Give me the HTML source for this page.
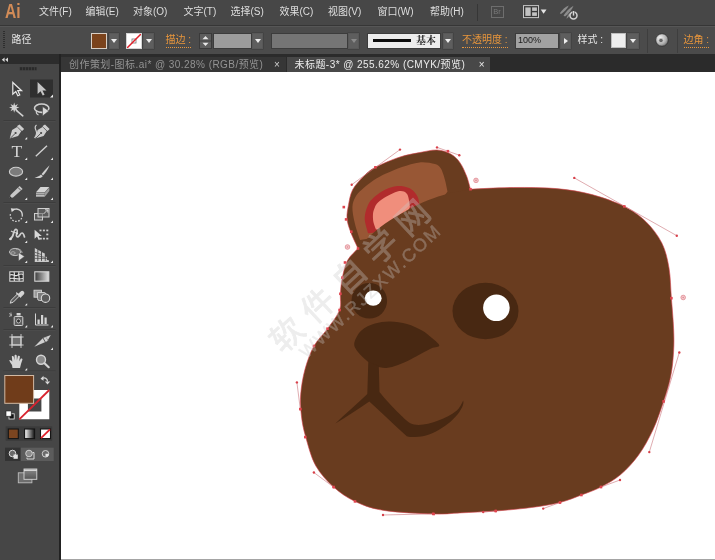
<!DOCTYPE html>
<html><head><meta charset="utf-8">
<style>
html,body{margin:0;padding:0;}
body{width:715px;height:560px;overflow:hidden;background:#fff;position:relative;font-family:"Liberation Sans","Noto Sans CJK SC",sans-serif;}
.abs{position:absolute;}
#menubar,#ctrlbar,#tabbar,#toolsvg{will-change:transform;}
#menubar{left:0;top:0;width:715px;height:25.500px;background:#474747;border-bottom:1px solid #363636;box-sizing:border-box;}
#ctrlbar{left:0;top:25.500px;width:715px;height:28px;background:#4b4b4b;box-shadow:inset 0 1px 0 #565656;}
#tabbar{left:60px;top:53.5px;width:655px;height:17.5px;background:#2b2b2b;}
#tools{left:0;top:53.5px;width:58.5px;height:507px;background:#464646;border-right:2.5px solid #222;}
#toolhead{left:0;top:53.5px;width:58.5px;height:10px;background:#2c2c2c;}
.menu{position:absolute;top:5px;font-size:10px;color:#dedede;white-space:nowrap;line-height:14px;}
.tab{position:absolute;top:2.5px;height:15px;font-size:10px;letter-spacing:0.45px;line-height:16px;white-space:nowrap;}
.tab .x{position:absolute;top:0;font-size:10px;}
.ctext{font-size:10px;line-height:14px;white-space:nowrap;}
.lnk{color:#e8963c;border-bottom:1px dotted #e8963c;line-height:14px;}
.sw{box-sizing:border-box;}
.dd{width:10.5px;height:16px;background:#5e5e5e;border:1px solid #585858;box-shadow:0 0 0 0.5px #3c3c3c;box-sizing:border-box;}
.dd i{position:absolute;left:1.5px;top:5px;width:0;height:0;border-style:solid;border-width:4px 3px 0 3px;border-color:#eee transparent transparent transparent;}
.dd.dis i{border-top-color:#8a8a8a;}
</style></head><body>
<div id="menubar" class="abs">
<div class="abs" style="left:5.200px;top:-1.200px;font-size:20px;font-weight:bold;color:#d18b57;line-height:25px;transform:scaleX(0.780);transform-origin:0 0;">Ai</div>
<div class="menu" style="left:39px;">文件(F)</div>
<div class="menu" style="left:85.5px;">编辑(E)</div>
<div class="menu" style="left:133px;">对象(O)</div>
<div class="menu" style="left:183.5px;">文字(T)</div>
<div class="menu" style="left:230.5px;">选择(S)</div>
<div class="menu" style="left:279.5px;">效果(C)</div>
<div class="menu" style="left:328px;">视图(V)</div>
<div class="menu" style="left:377.5px;">窗口(W)</div>
<div class="menu" style="left:430px;">帮助(H)</div>
<div class="abs" style="left:477px;top:4px;width:1px;height:17px;background:#363636;"></div>
<div class="abs" style="left:490.5px;top:6px;width:13px;height:11.5px;border:1px solid #6e6e6e;box-sizing:border-box;font-size:7.5px;line-height:10px;color:#7a7a7a;text-align:center;">Br</div>
<svg class="abs" style="left:520px;top:3px" width="62" height="20" viewBox="520 3 62 20">
<rect x="523.5" y="5.600" width="15" height="12" fill="#383838" stroke="#c6c6c6" stroke-width="1"/>
<rect x="525.300" y="7.400" width="5.400" height="8.500" fill="#c2c2c2"/>
<rect x="532.100" y="7.400" width="4.800" height="3.500" fill="#c2c2c2"/>
<rect x="532.100" y="12.300" width="4.800" height="3.600" fill="#c2c2c2"/>
<path d="M540.700,9.600h5.800l-2.900,4.200z" fill="#e4e4e4"/>
<g fill="#8c8c8c">
<path d="M559.800,13.200c2.500,-3.500 5.500,-6 9,-7.600c-1.500,3.500 -4.500,6.400 -7.800,8.400z"/>
<path d="M563.500,15.500c2.500,-4 5.800,-7.500 10,-9.800c-1.500,4 -4.800,8 -8.500,10.800z"/>
<path d="M566.500,18.800c0.300,-2 1.500,-4 3,-5.500l1.200,1.200c-1.500,1.800 -2.800,3.300 -4.200,4.300z"/>
</g>
<circle cx="573.500" cy="15.600" r="3.500" fill="#474747" stroke="#d2d2d2" stroke-width="1.500"/>
<rect x="572.400" y="10.500" width="2.200" height="5" fill="#474747"/>
<rect x="572.800" y="11" width="1.400" height="4.600" fill="#d8d8d8"/>
</svg>
</div>
<div id="ctrlbar" class="abs">
<div class="abs" style="left:2.5px;top:5px;width:2px;height:17px;background:repeating-linear-gradient(#2e2e2e 0 1px,transparent 1px 2px);"></div>
<div class="abs ctext" style="left:11.5px;top:6.500px;color:#e4e4e4;">路径</div>
<div class="abs sw" style="left:90.5px;top:6.500px;width:16px;height:16px;background:#7b431c;border:1px solid #d9cfc5;"></div>
<div class="abs dd" style="left:108.5px;top:6.500px;"><i></i></div>
<div class="abs sw" style="left:125.5px;top:6.500px;width:16px;height:16px;background:#fff;border:1px solid #d4d4d4;"><svg width="14" height="14" viewBox="0 0 14 14" style="position:absolute;left:0;top:0"><rect x="5" y="5" width="4" height="4" fill="none" stroke="#777" stroke-width="0.8"/><path d="M0,14L14,0" stroke="#e0202a" stroke-width="1.5"/></svg></div>
<div class="abs dd" style="left:143px;top:6.500px;"><i></i></div>
<div class="abs ctext lnk" style="left:165.5px;top:6.500px;">描边 :</div>
<div class="abs" style="left:199px;top:6.500px;width:12.5px;height:16px;background:#5e5e5e;border:1px solid #3a3a3a;box-sizing:border-box;"><svg width="11" height="14" viewBox="0 0 11 14" style="position:absolute;left:0;top:0"><path d="M2.5,5.2L5.5,2L8.5,5.2z M2.5,8.8L5.5,12L8.5,8.8z" fill="#e6e6e6"/><path d="M0,7h11" stroke="#3a3a3a" stroke-width="0.8"/></svg></div>
<div class="abs" style="left:213px;top:6.500px;width:38.5px;height:16px;background:#9c9c9c;border:1px solid #3c3c3c;box-sizing:border-box;"></div>
<div class="abs dd" style="left:252px;top:6.500px;"><i></i></div>
<div class="abs" style="left:271px;top:6.500px;width:76.5px;height:16px;background:#757575;border:1px solid #3c3c3c;box-sizing:border-box;"></div>
<div class="abs dd dis" style="left:348px;top:6.500px;"><i></i></div>
<div class="abs" style="left:367px;top:6.500px;width:74px;height:16px;background:#ececec;border:1px solid #3c3c3c;box-sizing:border-box;">
<div class="abs" style="left:5px;top:5.200px;width:38px;height:3.200px;background:#0c0c0c;"></div>
<div class="abs" style="left:48px;top:-1px;font-size:10px;line-height:16px;color:#222;font-weight:bold;font-family:'Liberation Serif','Noto Serif CJK SC',serif;">基本</div></div>
<div class="abs dd" style="left:442.500px;top:6.500px;"><i></i></div>
<div class="abs ctext lnk" style="left:462px;top:6.500px;">不透明度 :</div>
<div class="abs" style="left:515px;top:6.500px;width:44px;height:16px;background:#a2a2a2;border:1px solid #3c3c3c;box-sizing:border-box;"><span style="position:absolute;left:2px;top:0;font-size:9px;line-height:13px;color:#1c1c1c;">100%</span></div>
<div class="abs dd" style="left:560px;top:6.500px;"><i style="border-width:3px 0 3px 4.5px;border-color:transparent transparent transparent #eee;left:3px;top:4px;"></i></div>
<div class="abs ctext" style="left:577.5px;top:6.500px;color:#e4e4e4;">样式 :</div>
<div class="abs sw" style="left:611px;top:7px;width:15px;height:15px;background:#eeeeee;border:1px solid #bdbdbd;"></div>
<div class="abs dd" style="left:627px;top:6.500px;width:11.5px;"><i></i></div>
<div class="abs" style="left:646.5px;top:3px;width:1px;height:24px;background:#3e3e3e;"></div>
<svg class="abs" style="left:654px;top:6px" width="16" height="16" viewBox="0 0 16 16"><defs><radialGradient id="rg" cx="0.35" cy="0.35" r="0.8"><stop offset="0" stop-color="#f4f4f4"/><stop offset="0.6" stop-color="#b0b0b0"/><stop offset="1" stop-color="#555"/></radialGradient></defs><circle cx="8" cy="8" r="6.3" fill="url(#rg)" stroke="#2e2e2e" stroke-width="0.8"/><circle cx="7" cy="8.5" r="2.2" fill="#666" stroke="#ddd" stroke-width="0.6"/></svg>
<div class="abs" style="left:677px;top:3px;width:1px;height:24px;background:#3e3e3e;"></div>
<div class="abs ctext lnk" style="left:683.5px;top:6.500px;">边角 :</div>
</div>
<div id="tabbar" class="abs">
<div class="tab" style="left:1px;width:225px;background:#363636;color:#939393;"><span style="position:absolute;left:8px;top:0;">创作策划-图标.ai* @ 30.28% (RGB/预览)</span><span class="x" style="left:213px;color:#d0d0d0;">×</span></div>
<div class="tab" style="left:227px;width:203px;background:#484848;color:#ececec;"><span style="position:absolute;left:7.5px;top:0;">未标题-3* @ 255.62% (CMYK/预览)</span><span class="x" style="left:191.7px;">×</span></div>
</div>
<div id="botline" class="abs" style="left:61px;top:558.8px;width:654px;height:1.2px;background:#a4a4a4;"></div>
<div id="tools" class="abs"></div>
<div id="toolhead" class="abs"></div>
<svg id="toolsvg" class="abs" style="left:0;top:54px" width="61" height="506" viewBox="0 54 61 506">
<defs>
<linearGradient id="gh" x1="0" x2="1" y1="0" y2="0"><stop offset="0" stop-color="#3a3a3a"/><stop offset="1" stop-color="#e0e0e0"/></linearGradient>
<linearGradient id="gw" x1="0" x2="1" y1="0" y2="0"><stop offset="0" stop-color="#ffffff"/><stop offset="1" stop-color="#111"/></linearGradient>
<linearGradient id="gv" x1="0" x2="0" y1="0" y2="1"><stop offset="0" stop-color="#8a8a8a"/><stop offset="1" stop-color="#555"/></linearGradient>
</defs>
<!-- header arrows -->
<path d="M4.6,57.6v4.4l-2.8,-2.2z M8,57.6v4.4l-2.8,-2.2z" fill="#d8d8d8"/>
<!-- grip -->
<g fill="#2a2a2a"><rect x="19.5" y="67" width="17" height="3.4" fill="#3a3a3a"/><rect x="20" y="67.3" width="2" height="2.8"/><rect x="23" y="67.3" width="2" height="2.8"/><rect x="26" y="67.3" width="2" height="2.8"/><rect x="29" y="67.3" width="2" height="2.8"/><rect x="32" y="67.3" width="2" height="2.8"/><rect x="35" y="67.3" width="1.4" height="2.8"/></g>
<!-- selected tool bg -->
<rect x="30" y="79.5" width="23" height="18" fill="#2f2f2f"/>
<!-- selection arrow (outline) -->
<path d="M12.8,82.5v11.6l3,-2.6l2,4.3l2,-0.9l-2,-4.2h3.8z" fill="#3a3a3a" stroke="#e6e6e6" stroke-width="1.2" stroke-linejoin="miter"/>
<!-- direct selection (filled) -->
<path d="M37.6,82v12l3,-2.8l2.1,4.4l1.9,-0.9l-2.1,-4.3h4z" fill="#c4c4c4"/>
<path d="M53,94.6v3h-3z" fill="#f0f0f0"/>
<!-- magic wand -->
<path d="M16.300,110.300l6.500,5.500" stroke="#d0d0d0" stroke-width="1.600" stroke-linecap="round"/>
<path d="M14.2,102.4L15.1,105.4L17.9,103.9L16.4,106.7L19.4,107.6L16.4,108.5L17.9,111.3L15.1,109.8L14.2,112.8L13.3,109.8L10.5,111.3L12.0,108.5L9.0,107.6L12.0,106.7L10.5,103.9L13.3,105.4z" fill="#d2d2d2"/>
<!-- lasso -->
<ellipse cx="41.700" cy="108.200" rx="7.200" ry="4.200" fill="none" stroke="#cfcfcf" stroke-width="1.600"/>
<path d="M37,110.5c-1.5,1.5 -0.5,3.5 1.5,4.5" fill="none" stroke="#cfcfcf" stroke-width="1.2"/>
<path d="M42.5,106.5v9.5l6.5,-5z" fill="#d8d8d8" stroke="#464646" stroke-width="0.6"/>
<!-- separators -->
<g stroke="#3a3a3a" stroke-width="1"><path d="M3.500,120.500h52 M3.500,202.500h52 M3.500,265.500h52 M3.500,307.500h52 M3.500,329.500h52 M3.500,371h52"/></g>
<g stroke="#525252" stroke-width="0.6"><path d="M3.500,121.300h52 M3.500,203.300h52 M3.500,266.300h52 M3.500,308.300h52 M3.500,330.300h52 M3.500,371.800h52"/></g>
<!-- pen -->
<g id="pen"><path d="M19.5,124.5l4.6,4.6l-2,2l-0.6,-0.4l-3.4,5.4l-8.4,2.4l2.4,-8.4l5.4,-3.4l-0.4,-0.6z" fill="#cdcdcd"/><path d="M10.3,138.3l4.7,-4.7" stroke="#464646" stroke-width="0.9"/><circle cx="15.6" cy="133" r="1.1" fill="#464646"/><path d="M17.6,127.2l4,4" stroke="#464646" stroke-width="0.8"/></g>
<path d="M27.2,137v2.4h-2.4z" fill="#e8e8e8"/>
<!-- curvature pen -->
<g transform="translate(25.5,0)"><path d="M19.5,124.5l4.6,4.6l-2,2l-0.6,-0.4l-3.4,5.4l-8.4,2.4l2.4,-8.4l5.4,-3.4l-0.4,-0.6z" fill="#cdcdcd"/><path d="M10.3,138.3l4.7,-4.7" stroke="#464646" stroke-width="0.9"/><circle cx="15.6" cy="133" r="1.1" fill="#464646"/><path d="M17.6,127.2l4,4" stroke="#464646" stroke-width="0.8"/></g>
<path d="M36.5,125c-2,1.5 -1.5,3.5 -0.5,5.5s0.5,5 -1.5,7.5" fill="none" stroke="#cdcdcd" stroke-width="1.2"/>
<!-- T -->
<text x="16.8" y="157.3" font-family="Liberation Serif, serif" font-size="17.5" fill="#d4d4d4" text-anchor="middle">T</text>
<path d="M27.2,157.6v2.4h-2.4z" fill="#e8e8e8"/>
<!-- line -->
<path d="M35.8,156.3L47,145.8" stroke="#d0d0d0" stroke-width="1.4"/>
<path d="M53,157.6v2.4h-2.4z" fill="#e8e8e8"/>
<!-- ellipse -->
<ellipse cx="16" cy="171.7" rx="6.6" ry="4.4" fill="#7c7c7c" stroke="#cfcfcf" stroke-width="1.1"/>
<path d="M27.2,177.6v2.4h-2.4z" fill="#e8e8e8"/>
<!-- brush -->
<path d="M49.6,165.2c-3,3 -6,6.4 -8,8.8l1.4,1.4c2.4,-2.4 5,-6 6.600,-10.200z" fill="#d0d0d0"/>
<path d="M41,174.400l1.800,1.800c-1.500,2 -5,2.200 -8.300,1.300c2.600,-0.300 4.500,-1.300 6.500,-3.100z" fill="#d0d0d0"/>
<path d="M53,177.600v2.400h-2.400z" fill="#e8e8e8"/>
<!-- pencil -->
<g><path d="M19.600,186l3,3l-9.600,8.400l-3.400,0.900l0.900,-3.400z" fill="#c8c8c8"/><path d="M18,187.500l3,3" stroke="#464646" stroke-width="0.9"/><path d="M10.200,196.300l1.700,1.700l-2.400,0.700z" fill="#333"/></g>
<path d="M27.200,197.600v2.400h-2.400z" fill="#e8e8e8"/>
<!-- eraser -->
<g><path d="M40.500,187h8.800l-4.500,5.200h-8.800z" fill="#d4d4d4"/><path d="M36,192.700h8.800v4h-8.800z" fill="#bdbdbd"/><path d="M44.800,192.700l4.500,-5.200v3.600l-4.500,5.600z" fill="#9a9a9a"/><path d="M36,194.300h8.800" stroke="#464646" stroke-width="0.6"/></g>
<path d="M53,197.600v2.400h-2.400z" fill="#e8e8e8"/>
<!-- rotate -->
<path d="M12.500,210.500a6,6 0 0 1 9.800,4.500" fill="none" stroke="#cfcfcf" stroke-width="1.4"/>
<path d="M22.300,215a6,6 0 1 1 -11.500,-2" fill="none" stroke="#cfcfcf" stroke-width="1.300" stroke-dasharray="1.600 1.500"/>
<path d="M10.800,208.200l4.200,0.600l-3.200,3.400z" fill="#dcdcdc"/>
<path d="M27.200,220.500v2.400h-2.400z" fill="#e8e8e8"/>
<!-- scale -->
<rect x="34.500" y="213.500" width="8" height="6.500" fill="#5a5a5a" stroke="#cfcfcf" stroke-width="1"/>
<rect x="38" y="208.500" width="11" height="8.500" fill="#6a6a6a" fill-opacity="0.6" stroke="#cfcfcf" stroke-width="1"/>
<path d="M43.500,214l4,-4 M45,209.800h2.800v2.800" fill="none" stroke="#e0e0e0" stroke-width="0.9"/>
<path d="M53,220.500v2.400h-2.400z" fill="#e8e8e8"/>
<!-- width/warp -->
<path d="M10,239c2,-1 3,-3 3.500,-5.500s1.500,-4.500 3,-4s0.500,3.500 0,5s0.500,3 2,2s2,-3.500 3.500,-3.500s2,2 2.500,4" fill="none" stroke="#cfcfcf" stroke-width="1.700" stroke-linecap="round"/>
<path d="M11,231c2,1.500 4,2 6.500,2" fill="none" stroke="#cfcfcf" stroke-width="1.200"/>
<circle cx="10.600" cy="239" r="1.200" fill="#e0e0e0"/><circle cx="17" cy="233.500" r="1.100" fill="#e0e0e0"/>
<path d="M27.200,240.500v2.400h-2.400z" fill="#e8e8e8"/>
<!-- free transform -->
<path d="M34.600,229.700v9l2.400,-2.100l1.700,3.400l1.600,-0.800l-1.700,-3.300h3.200z" fill="#d8d8d8"/>
<g fill="#cfcfcf"><rect x="39.500" y="229.600" width="2" height="1.700"/><rect x="42.900" y="229.600" width="2" height="1.700"/><rect x="46.300" y="229.600" width="2" height="1.700"/><rect x="46.300" y="233.600" width="2" height="1.700"/><rect x="46.300" y="237.800" width="2" height="1.700"/><rect x="42.900" y="237.800" width="2" height="1.700"/><rect x="39.800" y="237.800" width="2" height="1.700"/></g>
<!-- shape builder -->
<ellipse cx="15" cy="252" rx="5.500" ry="3.600" fill="#6a6a6a" stroke="#bdbdbd" stroke-width="1"/>
<ellipse cx="13" cy="253" rx="2.200" ry="1.300" fill="none" stroke="#bdbdbd" stroke-width="0.700"/>
<path d="M16,249c3.500,-0.500 6,1.500 6,4" fill="none" stroke="#bdbdbd" stroke-width="0.900"/>
<path d="M18.500,252.500v8.500l6,-4.600z" fill="#dadada" stroke="#464646" stroke-width="0.500"/>
<path d="M27.200,260.500v2.400h-2.400z" fill="#e8e8e8"/>
<!-- perspective grid -->
<g fill="#cdcdcd"><path d="M34.800,248v13.400h2.600v-12z"/><path d="M38.300,250v11.400h2.800v-10z"/><path d="M42,252.300v9.100h2.800v-7.800z"/><path d="M45.600,256.500v4.900h3.200v-1.500h-1.800v-3z" fill="#bdbdbd"/></g>
<path d="M34.800,252.200l6.500,2.300 M34.800,255.300l10,2 M34.800,258.400h12" stroke="#464646" stroke-width="0.700" fill="none"/>
<path d="M34.800,261.400h14" stroke="#d4d4d4" stroke-width="1"/>
<path d="M53,260.500v2.400h-2.400z" fill="#e8e8e8"/>
<!-- mesh -->
<rect x="9.800" y="271.800" width="13.400" height="9.400" fill="#2e2e2e" stroke="#d6d6d6" stroke-width="1.100"/>
<path d="M10,275c3,-1.500 5,1.500 7,0.500s4,-2.500 6,-1 M14,272c1.500,3 -1,5.500 0.500,9 M19,272c-1.500,3 1.500,6 0,9 M10,278.500c4,-1 8,1.500 13,0" fill="none" stroke="#e4e4e4" stroke-width="1.100"/>
<!-- gradient -->
<rect x="34.800" y="271.800" width="14" height="9.400" fill="url(#gh)" stroke="#d6d6d6" stroke-width="1.100"/>
<!-- eyedropper -->
<path d="M10.200,303.200l1,-3l6.500,-6.500l2,2l-6.500,6.500z" fill="#5a5a5a" stroke="#d4d4d4" stroke-width="1"/>
<path d="M16.600,293l4,4 M18.500,294.500l2.600,-2.600a1.500,1.500 0 0 1 2.200,2.200l-2.600,2.600z" fill="#d4d4d4" stroke="#d4d4d4" stroke-width="1.200" stroke-linecap="round"/>
<path d="M27.200,303.200v2.400h-2.400z" fill="#e8e8e8"/>
<!-- blend -->
<rect x="34" y="290.200" width="7.500" height="7" fill="#9a9a9a" stroke="#d4d4d4" stroke-width="0.900"/>
<path d="M37.500,292.500h6.500a2,2 0 0 1 2,2v6h-6.500a2,2 0 0 1 -2,-2z" fill="#7a7a7a" stroke="#d4d4d4" stroke-width="0.900"/>
<circle cx="45.500" cy="298.200" r="4.200" fill="#5a5a5a" stroke="#d8d8d8" stroke-width="1.100"/>
<!-- symbol sprayer -->
<rect x="14.200" y="316.500" width="8.600" height="9" rx="1" fill="#5c5c5c" stroke="#d4d4d4" stroke-width="1"/>
<rect x="16.600" y="313" width="4" height="2.500" fill="#d4d4d4"/>
<circle cx="18.500" cy="321" r="2" fill="#2e2e2e" stroke="#d4d4d4" stroke-width="0.800"/>
<path d="M9,313.500l3,1.500 M9,316.500l3,-1.500 M11,312.500v4" stroke="#bdbdbd" stroke-width="0.800"/>
<path d="M27.200,325v2.400h-2.400z" fill="#e8e8e8"/>
<!-- graph -->
<path d="M35.500,313.500v11.500h13" fill="none" stroke="#d4d4d4" stroke-width="1"/>
<rect x="37.500" y="319.500" width="2.200" height="4.500" fill="#d4d4d4"/><rect x="41" y="315" width="2.200" height="9" fill="#d4d4d4"/><rect x="44.500" y="317.500" width="2.200" height="6.500" fill="#d4d4d4"/>
<path d="M53,325v2.400h-2.400z" fill="#e8e8e8"/>
<!-- artboard -->
<rect x="12" y="337" width="9" height="8" fill="#6e6e6e" stroke="#d4d4d4" stroke-width="1"/>
<path d="M9.300,337h14.300 M9.300,345h14.300 M12,334v14 M21,334v14" stroke="#d4d4d4" stroke-width="0.900"/>
<!-- slice -->
<path d="M34.300,346.800l8.700,-8.800l7.800,-3l-3.600,6.300z" fill="#d0d0d0"/><path d="M43,338l2.300,4" stroke="#464646" stroke-width="0.900"/><path d="M45.500,336.800l2.600,3.500" stroke="#8a8a8a" stroke-width="0.700"/>
<path d="M53,347.500v2.400h-2.400z" fill="#e8e8e8"/>
<!-- hand -->
<path d="M12.500,368l-0.500,-3c-1,-1.500 -2.500,-3.500 -2.700,-4.800c0.800,-0.700 2,0 3,1.600l-0.500,-5.500c0.900,-0.700 1.700,-0.300 2,0.500l0.600,3.500l0.200,-5c0.800,-0.700 1.800,-0.500 2.100,0.200l0.200,4.800l1,-4.300c0.900,-0.500 1.800,-0.200 2,0.600l-0.700,4.700l1.700,-2.800c0.900,-0.300 1.600,0.200 1.600,1c-1,2.500 -1.800,5.500 -2.500,8.500z" fill="#d6d6d6"/>
<path d="M27.200,368v2.400h-2.400z" fill="#e8e8e8"/>
<!-- zoom -->
<circle cx="41" cy="359.700" r="4.500" fill="#8a8a8a" stroke="#d4d4d4" stroke-width="1.400"/>
<path d="M44.500,363.200l4.200,4" stroke="#d4d4d4" stroke-width="2.200" stroke-linecap="round"/>
<!-- stroke swatch -->
<path d="M19.300,390h30v29.300h-30z M27.900,398.600v12.800h13.500v-12.800z" fill="#fff" fill-rule="evenodd"/>
<path d="M19.300,419.300L49.300,390" stroke="#d8232e" stroke-width="1.800"/>
<!-- fill swatch -->
<rect x="4.800" y="375.500" width="28.800" height="27.800" fill="#703c1a" stroke="#d2b9a3" stroke-width="1"/>
<!-- swap arrows -->
<path d="M42,378.500c3,-1.500 5.500,0 5.500,3" fill="none" stroke="#d0d0d0" stroke-width="1.300"/>
<path d="M40.500,378.800l3,-3v5z M47.500,384.500l-2.600,-3h5.200z" fill="#d8d8d8"/>
<!-- default colors -->
<rect x="9" y="413.800" width="5.200" height="5.200" fill="#111" stroke="#e8e8e8" stroke-width="0.800"/>
<rect x="6" y="411" width="5.200" height="5.200" fill="#fff" stroke="#222" stroke-width="0.600"/>
<!-- color mode buttons -->
<rect x="5.700" y="426.400" width="46.500" height="14.400" fill="#3b3b3b"/>
<rect x="8.300" y="429" width="10" height="9.600" fill="#7b4520" stroke="#151515" stroke-width="1.100"/>
<rect x="24.600" y="429" width="10" height="9.600" fill="url(#gw)" stroke="#151515" stroke-width="1.100"/>
<rect x="40.500" y="429" width="10" height="9.600" fill="#fff" stroke="#151515" stroke-width="1.100"/>
<path d="M41,438.200L50,429.400" stroke="#e0202a" stroke-width="1.800"/>
<!-- drawing modes -->
<rect x="5" y="447.700" width="15.700" height="13.300" fill="#333"/>
<rect x="20.700" y="447.700" width="33" height="13.300" fill="#5c5c5c"/>
<circle cx="12.500" cy="453.500" r="3.300" fill="#6a6a6a" stroke="#d8d8d8" stroke-width="1"/><rect x="13.500" y="454.500" width="4.300" height="4.300" fill="#e4e4e4"/>
<circle cx="29" cy="453.500" r="3.300" fill="#8a8a8a" stroke="#cfcfcf" stroke-width="1"/><path d="M27,457.500v1.500h7v-6.500h-1.500" fill="none" stroke="#d8d8d8" stroke-width="1"/>
<circle cx="45.500" cy="453.800" r="3.300" fill="#6a6a6a" stroke="#cfcfcf" stroke-width="1"/><path d="M45.500,453.800h3.300a3.300,3.300 0 0 1 -3.300,3.300z" fill="#e4e4e4"/>
<!-- screen mode -->
<rect x="18.300" y="472.800" width="13.600" height="10" fill="#6e6e6e" stroke="#bdbdbd" stroke-width="0.900"/>
<rect x="24" y="469" width="12.800" height="10.300" fill="url(#gv)" stroke="#d8d8d8" stroke-width="0.900"/>
<path d="M24,470.300h12.800" stroke="#e0e0e0" stroke-width="1.200"/>
</svg>
<svg class="abs" style="left:0;top:0" width="715" height="560" viewBox="0 0 715 560">
<!--BEAR--><g id="bear">
<path d="M358.0,248.5C356.8,245.7 352.3,236.7 350.5,231.7C348.7,226.7 347.3,222.8 347.0,218.3C346.7,213.8 347.6,209.6 348.5,204.9C349.4,200.2 350.1,194.7 352.5,190.0C354.9,185.3 359.2,180.8 363.0,177.0C366.8,173.2 369.2,170.6 375.4,167.3C381.6,164.0 392.6,159.4 400.0,157.0C407.4,154.6 413.3,153.8 419.5,152.6C425.7,151.4 431.8,149.8 437.0,150.0C442.2,150.2 447.0,151.9 450.8,154.0C454.6,156.1 457.2,158.8 459.8,162.4C462.4,166.0 464.7,171.3 466.5,175.8C468.3,180.3 469.8,187.0 470.5,189.2L420,230Z" fill="#693c1f"/>
<path d="M360.0,240.0C359.2,237.3 356.3,229.5 355.0,224.0C353.7,218.5 352.2,211.7 352.4,207.0C352.6,202.3 354.1,199.2 356.0,196.0C357.9,192.8 360.6,190.7 363.6,188.0C366.6,185.3 370.3,182.4 374.0,180.0C377.7,177.6 381.3,175.8 386.0,173.6C390.7,171.4 396.4,168.9 402.0,167.0C407.6,165.1 414.0,162.9 419.5,162.4C425.0,161.9 431.5,163.1 435.0,164.0C438.5,164.9 439.2,166.4 440.5,168.0C441.8,169.6 442.2,171.3 443.0,173.6C443.8,175.9 444.8,179.0 445.5,182.0C446.2,185.0 447.2,189.9 447.5,191.5L420,230Z" fill="#985735"/>
<path d="M368.0,233.2C367.4,230.7 364.7,223.0 364.7,218.3C364.7,213.6 366.4,208.4 368.0,204.9C369.6,201.4 371.7,199.5 374.0,197.3C376.3,195.1 379.3,193.1 381.8,191.5C384.3,189.9 386.6,188.9 389.0,188.0C391.4,187.1 393.5,186.4 396.0,186.2C398.5,185.9 401.6,186.1 404.0,186.5C406.4,186.9 408.7,187.8 410.5,188.8C412.3,189.9 413.7,191.2 415.0,192.8C416.3,194.4 417.5,196.2 418.2,198.2C418.9,200.2 419.1,203.9 419.3,205.0L400,230Z" fill="#b12b2c"/>
<path d="M376.0,229.5C375.6,228.2 373.9,224.6 373.4,222.0C372.9,219.4 372.8,216.2 373.0,213.8C373.2,211.4 374.0,209.4 374.8,207.5C375.6,205.6 376.1,204.4 378.0,202.6C379.9,200.8 383.4,198.4 386.0,196.8C388.6,195.2 391.2,194.0 393.5,193.0C395.8,192.0 397.8,191.2 399.5,191.0C401.2,190.8 402.8,191.0 404.0,191.5C405.2,192.0 406.2,192.9 407.0,194.0C407.8,195.1 408.1,196.0 408.6,198.2C409.1,200.4 409.8,205.6 410.0,207.1L400,225Z" fill="#f08e7c"/>
<path d="M358.0,248.5C359.3,247.1 363.2,242.8 366.0,240.0C368.8,237.2 371.6,234.4 374.7,231.7C377.8,229.0 381.1,226.4 384.5,224.0C387.9,221.6 391.6,219.2 394.9,217.2C398.1,215.2 401.0,213.7 404.0,212.0C407.0,210.3 409.9,208.6 412.8,207.1C415.7,205.6 418.5,204.3 421.5,203.0C424.5,201.7 426.4,200.9 430.7,199.3C435.0,197.8 440.9,195.4 447.5,193.7C454.1,192.0 466.7,189.9 470.5,189.2C477.7,188.9 499.3,187.6 513.6,187.5C527.9,187.4 543.3,187.4 556.4,188.6C569.5,189.8 580.7,191.6 592.0,194.6C603.3,197.6 615.3,201.9 624.3,206.4C633.2,210.9 639.5,215.3 645.7,221.4C652.0,227.5 657.9,235.2 661.8,242.9C665.7,250.7 667.4,258.7 669.0,267.9C670.6,277.1 670.6,288.1 671.4,298.2C672.2,308.3 673.2,319.7 673.6,328.6C674.0,337.5 674.1,343.4 673.6,351.4C673.1,359.4 672.4,368.1 670.7,376.4C669.0,384.7 666.6,392.5 663.6,401.4C660.6,410.3 657.1,421.1 652.9,430.0C648.7,438.9 644.0,447.6 638.6,455.0C633.2,462.4 627.0,469.3 620.7,474.6C614.4,479.9 607.5,483.6 601.0,487.0C594.5,490.4 588.2,492.4 581.4,495.0C574.6,497.6 568.3,500.4 560.0,502.5C551.7,504.6 542.1,506.1 531.4,507.5C520.7,508.9 507.6,510.1 495.7,511.0C483.8,511.9 470.4,512.4 460.0,512.9C449.6,513.4 446.3,514.4 433.6,514.0C420.9,513.6 396.7,512.5 383.6,510.4C370.5,508.3 363.3,505.3 355.0,501.4C346.7,497.5 340.2,492.9 333.6,487.0C327.1,481.1 320.4,474.0 315.7,465.7C311.0,457.4 308.1,445.3 305.7,437.0C303.3,428.7 302.2,422.8 301.4,415.7C300.6,408.6 300.1,402.0 300.7,394.3C301.3,386.6 302.8,377.4 305.0,369.3C307.2,361.2 310.2,352.8 314.0,346.0C317.8,339.2 323.2,334.7 327.5,328.7C331.8,322.7 337.5,315.8 339.6,310.0C341.8,304.2 339.9,299.2 340.4,293.8C340.8,288.4 341.1,283.3 342.3,277.7C343.5,272.1 345.0,265.2 347.6,260.3C350.2,255.4 356.3,250.5 358.0,248.5Z" fill="#693c1f"/>
<circle cx="369.3" cy="300.8" r="17.8" fill="#482812"/>
<ellipse cx="373.2" cy="298.2" rx="8.4" ry="7.6" fill="#fff"/>
<ellipse cx="485.5" cy="311" rx="33" ry="28.2" fill="#482812"/>
<circle cx="496.4" cy="307.8" r="13.3" fill="#fff"/>
<path d="M354.3,343.0C354.9,339.4 357.9,333.6 361.4,330.4C364.8,327.1 370.2,325.0 375.0,323.5C379.8,322.0 384.7,321.3 390.0,321.4C395.3,321.5 401.7,322.5 407.0,324.0C412.3,325.5 417.8,328.1 422.0,330.4C426.2,332.7 429.1,335.4 432.0,338.0C434.9,340.6 439.5,343.9 439.3,345.7C439.1,347.4 435.6,346.3 431.0,348.5C426.4,350.7 416.9,356.2 411.4,359.0C405.9,361.8 402.2,363.5 398.0,365.0C393.8,366.5 390.2,367.7 386.4,367.9C382.6,368.1 378.3,367.2 375.0,366.0C371.7,364.8 369.6,363.0 366.8,360.7C364.0,358.4 360.1,354.9 358.0,352.0C355.9,349.1 353.7,346.6 354.3,343.0Z" fill="#482812"/>
<path d="M368.3,362 L378.8,366 L379.5,392 C386,400 394,409 401.4,415.7 C405,419 409,423.6 414,424.6 C422,425.6 430,423.8 437,421 C445,417.8 452,414.5 456.8,410.4 C459.5,408 461.5,404 463.2,400.4 C463.8,402.5 463.3,405 462.1,407.2 C459,413.5 453.5,419.5 447.9,423.8 C440,430 431,434.5 422.9,436.3 C417,437.4 411,437.3 406.8,436.2 C394,424.5 381,412 369.3,401.4 C358,409 347,416.5 335.4,423.6 C345,414 357,404 367.3,394 Z" fill="#482812"/>
<path d="M358.0,248.5C356.8,245.7 352.3,236.7 350.5,231.7C348.7,226.7 347.3,222.8 347.0,218.3C346.7,213.8 347.6,209.6 348.5,204.9C349.4,200.2 350.1,194.7 352.5,190.0C354.9,185.3 359.2,180.8 363.0,177.0C366.8,173.2 369.2,170.6 375.4,167.3C381.6,164.0 392.6,159.4 400.0,157.0C407.4,154.6 413.3,153.8 419.5,152.6C425.7,151.4 431.8,149.8 437.0,150.0C442.2,150.2 447.0,151.9 450.8,154.0C454.6,156.1 457.2,158.8 459.8,162.4C462.4,166.0 464.7,171.3 466.5,175.8C468.3,180.3 469.8,187.0 470.5,189.2C477.7,188.9 499.3,187.6 513.6,187.5C527.9,187.4 543.3,187.4 556.4,188.6C569.5,189.8 580.7,191.6 592.0,194.6C603.3,197.6 615.3,201.9 624.3,206.4C633.2,210.9 639.5,215.3 645.7,221.4C652.0,227.5 657.9,235.2 661.8,242.9C665.7,250.7 667.4,258.7 669.0,267.9C670.6,277.1 670.6,288.1 671.4,298.2C672.2,308.3 673.2,319.7 673.6,328.6C674.0,337.5 674.1,343.4 673.6,351.4C673.1,359.4 672.4,368.1 670.7,376.4C669.0,384.7 666.6,392.5 663.6,401.4C660.6,410.3 657.1,421.1 652.9,430.0C648.7,438.9 644.0,447.6 638.6,455.0C633.2,462.4 627.0,469.3 620.7,474.6C614.4,479.9 607.5,483.6 601.0,487.0C594.5,490.4 588.2,492.4 581.4,495.0C574.6,497.6 568.3,500.4 560.0,502.5C551.7,504.6 542.1,506.1 531.4,507.5C520.7,508.9 507.6,510.1 495.7,511.0C483.8,511.9 470.4,512.4 460.0,512.9C449.6,513.4 446.3,514.4 433.6,514.0C420.9,513.6 396.7,512.5 383.6,510.4C370.5,508.3 363.3,505.3 355.0,501.4C346.7,497.5 340.2,492.9 333.6,487.0C327.1,481.1 320.4,474.0 315.7,465.7C311.0,457.4 308.1,445.3 305.7,437.0C303.3,428.7 302.2,422.8 301.4,415.7C300.6,408.6 300.1,402.0 300.7,394.3C301.3,386.6 302.8,377.4 305.0,369.3C307.2,361.2 310.2,352.8 314.0,346.0C317.8,339.2 323.2,334.7 327.5,328.7C331.8,322.7 337.5,315.8 339.6,310.0C341.8,304.2 339.9,299.2 340.4,293.8C340.8,288.4 341.1,283.3 342.3,277.7C343.5,272.1 345.0,265.2 347.6,260.3C350.2,255.4 356.3,250.5 358.0,248.5" fill="none" stroke="#d8404a" stroke-width="0.7" opacity="0.85"/>
<line x1="574.3" y1="177.9" x2="676.8" y2="235.7" stroke="#c9737a" stroke-width="0.6"/>
<circle cx="574.3" cy="177.9" r="1.2" fill="#d8404a"/>
<circle cx="676.8" cy="235.7" r="1.2" fill="#d8404a"/>
<line x1="679.3" y1="352.5" x2="649.3" y2="452.1" stroke="#c9737a" stroke-width="0.6"/>
<circle cx="679.3" cy="352.5" r="1.2" fill="#d8404a"/>
<circle cx="649.3" cy="452.1" r="1.2" fill="#d8404a"/>
<line x1="620.0" y1="480.0" x2="601.0" y2="487.0" stroke="#c9737a" stroke-width="0.6"/>
<circle cx="620.0" cy="480.0" r="1.2" fill="#d8404a"/>
<circle cx="601.0" cy="487.0" r="1.2" fill="#d8404a"/>
<line x1="543.2" y1="508.6" x2="560.0" y2="502.5" stroke="#c9737a" stroke-width="0.6"/>
<circle cx="543.2" cy="508.6" r="1.2" fill="#d8404a"/>
<circle cx="560.0" cy="502.5" r="1.2" fill="#d8404a"/>
<line x1="483.2" y1="512.0" x2="495.7" y2="511.0" stroke="#c9737a" stroke-width="0.6"/>
<circle cx="483.2" cy="512.0" r="1.2" fill="#d8404a"/>
<circle cx="495.7" cy="511.0" r="1.2" fill="#d8404a"/>
<line x1="383.0" y1="515.0" x2="433.0" y2="513.8" stroke="#c9737a" stroke-width="0.6"/>
<circle cx="383.0" cy="515.0" r="1.2" fill="#d8404a"/>
<circle cx="433.0" cy="513.8" r="1.2" fill="#d8404a"/>
<line x1="313.9" y1="472.5" x2="333.9" y2="487.3" stroke="#c9737a" stroke-width="0.6"/>
<circle cx="313.9" cy="472.5" r="1.2" fill="#d8404a"/>
<circle cx="333.9" cy="487.3" r="1.2" fill="#d8404a"/>
<line x1="296.9" y1="382.4" x2="300.3" y2="409.1" stroke="#c9737a" stroke-width="0.6"/>
<circle cx="296.9" cy="382.4" r="1.2" fill="#d8404a"/>
<circle cx="300.3" cy="409.1" r="1.2" fill="#d8404a"/>
<line x1="351.7" y1="184.7" x2="400.0" y2="149.6" stroke="#c9737a" stroke-width="0.6"/>
<circle cx="351.7" cy="184.7" r="1.2" fill="#d8404a"/>
<circle cx="400.0" cy="149.6" r="1.2" fill="#d8404a"/>
<line x1="437.0" y1="147.4" x2="459.3" y2="155.2" stroke="#c9737a" stroke-width="0.6"/>
<circle cx="437.0" cy="147.4" r="1.2" fill="#d8404a"/>
<circle cx="459.3" cy="155.2" r="1.2" fill="#d8404a"/>
<rect x="356.7" y="247.2" width="2.6" height="2.6" fill="#e0454f"/>
<rect x="350.0" y="230.4" width="2.6" height="2.6" fill="#e0454f"/>
<rect x="344.8" y="218.1" width="2.6" height="2.6" fill="#e0454f"/>
<rect x="342.5" y="205.8" width="2.6" height="2.6" fill="#e0454f"/>
<rect x="374.1" y="166.0" width="2.6" height="2.6" fill="#e0454f"/>
<rect x="446.6" y="149.9" width="2.6" height="2.6" fill="#e0454f"/>
<rect x="469.2" y="187.9" width="2.6" height="2.6" fill="#e0454f"/>
<rect x="623.0" y="205.1" width="2.6" height="2.6" fill="#e0454f"/>
<rect x="670.1" y="296.9" width="2.6" height="2.6" fill="#e0454f"/>
<rect x="662.3" y="400.1" width="2.6" height="2.6" fill="#e0454f"/>
<rect x="599.7" y="485.7" width="2.6" height="2.6" fill="#e0454f"/>
<rect x="580.1" y="493.7" width="2.6" height="2.6" fill="#e0454f"/>
<rect x="558.7" y="501.2" width="2.6" height="2.6" fill="#e0454f"/>
<rect x="494.4" y="509.7" width="2.6" height="2.6" fill="#e0454f"/>
<rect x="432.3" y="512.7" width="2.6" height="2.6" fill="#e0454f"/>
<rect x="353.7" y="500.1" width="2.6" height="2.6" fill="#e0454f"/>
<rect x="332.3" y="485.7" width="2.6" height="2.6" fill="#e0454f"/>
<rect x="304.0" y="435.8" width="2.6" height="2.6" fill="#e0454f"/>
<rect x="299.0" y="407.8" width="2.6" height="2.6" fill="#e0454f"/>
<rect x="312.7" y="344.7" width="2.6" height="2.6" fill="#e0454f"/>
<rect x="326.2" y="327.4" width="2.6" height="2.6" fill="#e0454f"/>
<rect x="338.3" y="308.7" width="2.6" height="2.6" fill="#e0454f"/>
<rect x="339.1" y="292.5" width="2.6" height="2.6" fill="#e0454f"/>
<rect x="341.0" y="276.4" width="2.6" height="2.6" fill="#e0454f"/>
<rect x="343.7" y="261.2" width="2.6" height="2.6" fill="#e0454f"/>
<circle cx="476.0" cy="180.4" r="2.3" fill="#f4c9cd" stroke="#e08a92" stroke-width="0.8"/><circle cx="476.0" cy="180.4" r="0.8" fill="#e08a92"/>
<circle cx="683.2" cy="297.5" r="2.3" fill="#f4c9cd" stroke="#e08a92" stroke-width="0.8"/><circle cx="683.2" cy="297.5" r="0.8" fill="#e08a92"/>
<circle cx="347.5" cy="247.0" r="2.3" fill="#f4c9cd" stroke="#e08a92" stroke-width="0.8"/><circle cx="347.5" cy="247.0" r="0.8" fill="#e08a92"/>
</g><!--/BEAR-->
<g id="wm" opacity="0.34" fill="#cacaca" stroke="#cacaca" stroke-width="0.8" stroke-linejoin="round" font-family="Liberation Sans, Noto Sans CJK SC, sans-serif">
<text transform="translate(349.5,276) rotate(-43)" text-anchor="middle" font-size="33" letter-spacing="10" x="5" y="12">软件自学网</text>
<text transform="translate(369.5,291.5) rotate(-43)" text-anchor="middle" font-size="18" letter-spacing="1.800" x="1" y="6.500" stroke-width="0.400">WWW.RJZXW.COM</text>
</g>
</svg>
</body></html>
